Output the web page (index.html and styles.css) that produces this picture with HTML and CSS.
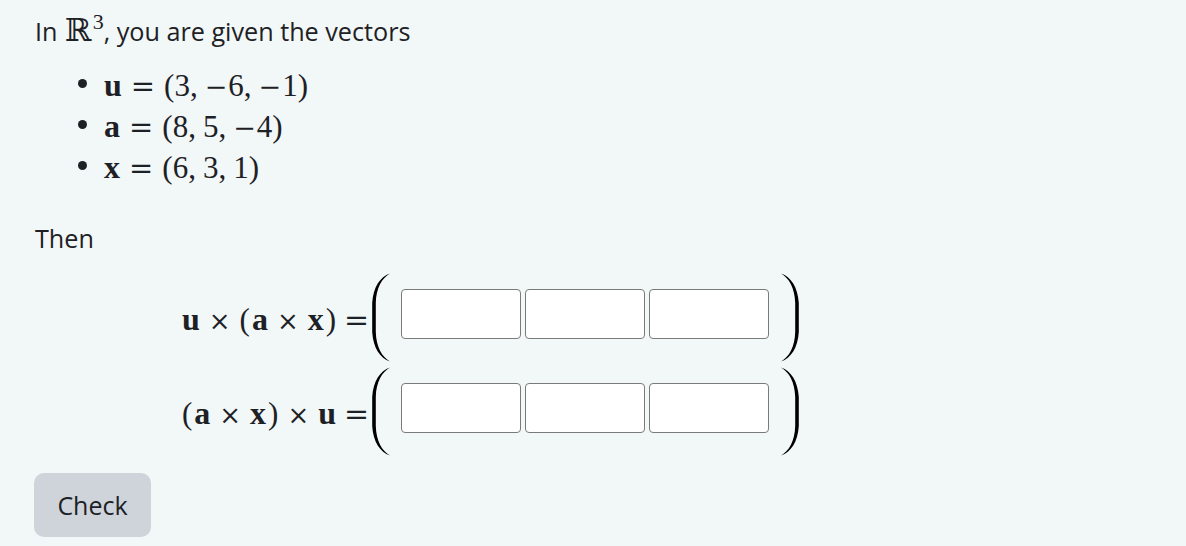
FILE: index.html
```html
<!DOCTYPE html>
<html lang="en">
<head>
<meta charset="utf-8">
<title>Vectors</title>
<link rel="stylesheet" href="styles.css">
</head>
<body>
<div class="page">
  <p class="intro">In <span class="m"><span class="bb">ℝ</span><sup class="sup">3</sup></span>, you are given the vectors</p>
  <ul class="vecs">
    <li><span class="m"><b class="bv">u</b><span class="rel">=</span>(3,<span class="sp"></span><span class="neg">−</span>6,<span class="sp"></span><span class="neg">−</span>1)</span></li>
    <li><span class="m"><b class="bv">a</b><span class="rel">=</span>(8,<span class="sp"></span>5,<span class="sp"></span><span class="neg">−</span>4)</span></li>
    <li><span class="m"><b class="bv">x</b><span class="rel">=</span>(6,<span class="sp"></span>3,<span class="sp"></span>1)</span></li>
  </ul>
  <p class="then">Then</p>
  <div class="eqs">
    <div class="row">
      <div class="lhs m"><b class="bv">u</b><span class="bin">×</span><span class="pl">(</span><b class="bv">a</b><span class="bin">×</span><b class="bv">x</b><span class="pr">)</span></div>
      <div class="eq m"><span class="rel">=</span></div>
      <div class="mat">
        <svg class="paren" viewBox="0 0 18 89" width="18" height="89"><path d="M18,0.5 C8,4 1.2,14 0.2,30 L0.2,59 C1.2,75 8,85 18,88.5 C10,84 4.2,74 3.8,59 L3.8,30 C4.2,15 10,5 18,0.5 Z"/></svg>
        <div class="cells">
          <input class="cell" type="text" aria-label="x">
          <input class="cell" type="text" aria-label="y">
          <input class="cell" type="text" aria-label="z">
        </div>
        <svg class="paren" viewBox="0 0 18 89" width="18" height="89"><path d="M0,0.5 C10,4 16.8,14 17.8,30 L17.8,59 C16.8,75 10,85 0,88.5 C8,84 13.8,74 14.2,59 L14.2,30 C13.8,15 8,5 0,0.5 Z"/></svg>
      </div>
    </div>
    <div class="row">
      <div class="lhs m"><span class="pl">(</span><b class="bv">a</b><span class="bin">×</span><b class="bv">x</b><span class="pr">)</span><span class="bin">×</span><b class="bv">u</b></div>
      <div class="eq m"><span class="rel">=</span></div>
      <div class="mat">
        <svg class="paren" viewBox="0 0 18 89" width="18" height="89"><path d="M18,0.5 C8,4 1.2,14 0.2,30 L0.2,59 C1.2,75 8,85 18,88.5 C10,84 4.2,74 3.8,59 L3.8,30 C4.2,15 10,5 18,0.5 Z"/></svg>
        <div class="cells">
          <input class="cell" type="text" aria-label="x">
          <input class="cell" type="text" aria-label="y">
          <input class="cell" type="text" aria-label="z">
        </div>
        <svg class="paren" viewBox="0 0 18 89" width="18" height="89"><path d="M0,0.5 C10,4 16.8,14 17.8,30 L17.8,59 C16.8,75 10,85 0,88.5 C8,84 13.8,74 14.2,59 L14.2,30 C13.8,15 8,5 0,0.5 Z"/></svg>
      </div>
    </div>
  </div>
  <button class="check" type="button">Check</button>
</div>
</body>
</html>
```
FILE: styles.css
```css
html, body {
  margin: 0;
  padding: 0;
  background: #f2f7f7;
  color: #1d2125;
}
body {
  font-family: "Open Sans", "Noto Sans", sans-serif;
  font-size: 25.2px;
}
.page {
  padding: 11px 0 0 35px;
}
.intro {
  margin: 0;
  line-height: 38px;
}
.m {
  font-family: "Liberation Serif", "DejaVu Serif", serif;
  font-size: 31px;
}
.bb {
  font-family: "DejaVu Serif", serif;
  font-size: 32px;
  margin-left: 1px;
}
.sup {
  font-size: 22px;
  vertical-align: 12px;
  line-height: 0;
  margin-left: 1px;
}
.vecs {
  list-style: none;
  margin: 15px 0 0 0;
  padding: 0 0 0 43px;
}
.vecs li {
  display: flex;
  align-items: center;
  height: 41px;
  line-height: 41px;
}
.vecs li::before {
  content: "";
  width: 9px;
  height: 9px;
  border-radius: 50%;
  background: #1d2125;
  margin-right: 17px;
  margin-top: -4px;
  flex: none;
}
.bv {
  font-weight: bold;
  font-size: 32px;
}
.rel {
  font-family: "DejaVu Serif", serif;
  font-size: 29px;
  margin: 0 9px 0 9px;
}
.bin {
  font-family: "DejaVu Serif", serif;
  font-size: 26px;
  margin: 0 9px;
}
.neg {
  font-family: "DejaVu Serif", serif;
  font-size: 27px;
  margin-right: 1px;
}
.pl {
  margin-right: 2px;
}
.pr {
  margin-left: 2px;
}
.sp {
  display: inline-block;
  width: 7px;
}
.then {
  margin: 31px 0 0 0;
  line-height: 38px;
}
.eqs {
  margin: 16px 0 0 0;
  display: flex;
  flex-direction: column;
  gap: 5px;
}
.row {
  display: flex;
  align-items: center;
  height: 89px;
}
.lhs {
  width: 160px;
  margin-left: 141px;
  text-align: right;
  white-space: nowrap;
  padding-top: 4px;
}
.eq {
  margin-left: 8px;
  width: 28px;
  padding-top: 4px;
}
.eq .rel {
  margin: 0;
  font-size: 30px;
}
.mat {
  display: flex;
  align-items: flex-start;
  height: 89px;
}
.paren {
  display: block;
  fill: #000;
}
.cells {
  display: flex;
  gap: 4px;
  margin: 16px 12px 0 11px;
}
.cell {
  box-sizing: border-box;
  width: 120px;
  height: 50px;
  margin: 0;
  border: 1px solid #7a7a7a;
  border-radius: 4px;
  background: #fff;
  padding: 0 8px;
  font: inherit;
}
.check {
  display: block;
  margin: 17px 0 0 -1px;
  width: 117px;
  height: 64px;
  border: none;
  border-radius: 10px;
  background: #ced4da;
  color: #1d2125;
  font-family: "Open Sans", "Noto Sans", sans-serif;
  font-size: 25px;
  padding: 0;
}
```
